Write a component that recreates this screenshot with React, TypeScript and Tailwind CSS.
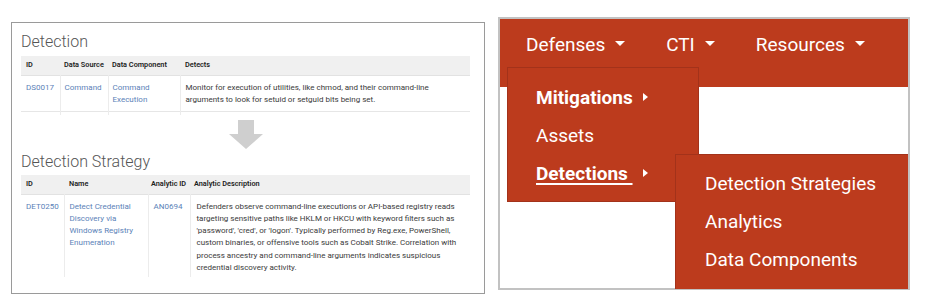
import React from "react";

const linkC = "text-[#5b82b8]";

function Caret() {
  return (
    <span className="inline-block ml-[10px] w-0 h-0 border-l-[5px] border-r-[5px] border-t-[5px] border-l-transparent border-r-transparent border-t-white align-middle relative top-[-2px]" />
  );
}

function RightCaret() {
  return (
    <span className="inline-block ml-[10px] w-0 h-0 border-t-[4px] border-b-[4px] border-l-[5px] border-t-transparent border-b-transparent border-l-white align-middle relative top-[-1px]" />
  );
}

export default function App() {
  return (
    <div
      className="w-[936px] h-[303px] bg-white flex items-start"
      style={{ fontFamily: "Roboto, 'Liberation Sans', sans-serif" }}
    >
      {/* Left panel */}
      <div className="ml-[11px] mt-[22px] w-[474px] h-[272px] border border-[#9a9a9a] pl-[9px] pr-[14px] pt-[8px] overflow-hidden">
        <div className="text-[16px] leading-[22px] font-light text-[#555]">Detection</div>
        <table className="mt-[3px] w-[449px] table-fixed border-collapse text-[8px] leading-[12px] text-[#3a3a3a]">
          <colgroup>
            <col className="w-[39px]" />
            <col className="w-[48px]" />
            <col className="w-[72px]" />
            <col className="w-[290px]" />
          </colgroup>
          <thead>
            <tr className="bg-[#f0f0f0] border-b border-[#e2e2e2] h-[19px] text-[7.3px] whitespace-nowrap text-[#222]">
              <th className="text-left font-semibold px-[5px]">ID</th>
              <th className="text-left font-semibold px-[4px]">Data Source</th>
              <th className="text-left font-semibold px-[4px]">Data Component</th>
              <th className="text-left font-semibold px-[5px]">Detects</th>
            </tr>
          </thead>
          <tbody>
            <tr className="border-b border-[#e6e6e6] align-top">
              <td className={`px-[5px] pt-[6px] pb-[5px] border-r border-[#ececec] ${linkC}`}>DS0017</td>
              <td className={`px-[4px] pt-[6px] pb-[5px] border-r border-[#ececec] ${linkC}`}>Command</td>
              <td className={`px-[4px] pt-[6px] pb-[5px] border-r border-[#ececec] ${linkC}`}>Command Execution</td>
              <td className="px-[5px] pt-[6px] pb-[5px]">
                Monitor for execution of utilities, like chmod, and their command-line arguments to look for setuid or setguid bits being set.
              </td>
            </tr>
            <tr className="h-[4px]">
              <td className="border-r border-[#ececec]" />
              <td className="border-r border-[#ececec]" />
              <td className="border-r border-[#ececec]" />
              <td />
            </tr>
          </tbody>
        </table>
        <div className="flex justify-center mt-[5px] h-[29px]">
          <svg width="34" height="29" viewBox="0 0 34 29">
            <path d="M9 0 H25 V14 H34 L17 29 L0 14 H9 Z" fill="#cfcfcf" />
          </svg>
        </div>
        <div className="mt-[2px] text-[16px] leading-[22px] font-light text-[#555]">Detection Strategy</div>
        <table className="mt-[2px] w-[449px] table-fixed border-collapse text-[8px] leading-[12.3px] text-[#3a3a3a]">
          <colgroup>
            <col className="w-[43px]" />
            <col className="w-[84px]" />
            <col className="w-[42px]" />
            <col className="w-[280px]" />
          </colgroup>
          <thead>
            <tr className="bg-[#f0f0f0] border-b border-[#e2e2e2] h-[19px] text-[7.3px] whitespace-nowrap text-[#222]">
              <th className="text-left font-semibold px-[5px]">ID</th>
              <th className="text-left font-semibold px-[5px]">Name</th>
              <th className="text-left font-semibold px-[3px]">Analytic ID</th>
              <th className="text-left font-semibold px-[4px]">Analytic Description</th>
            </tr>
          </thead>
          <tbody>
            <tr className="align-top">
              <td className={`px-[5px] pt-[6px] pb-[3px] border-r border-[#ececec] ${linkC}`}>DET0250</td>
              <td className={`px-[5px] pt-[6px] pb-[3px] border-r border-[#ececec] ${linkC}`}>
                Detect Credential Discovery via Windows Registry Enumeration
              </td>
              <td className={`px-[5px] pt-[6px] pb-[3px] border-r border-[#ececec] ${linkC}`}>AN0694</td>
              <td className="px-[6px] pt-[6px] pb-[3px]">
                Defenders observe command-line executions or API-based registry reads targeting sensitive paths like HKLM or HKCU with keyword filters such as 'password', 'cred', or 'logon'. Typically performed by Reg.exe, PowerShell, custom binaries, or offensive tools such as Cobalt Strike. Correlation with process ancestry and command-line arguments indicates suspicious credential discovery activity.
              </td>
            </tr>
          </tbody>
        </table>
      </div>

      {/* Right panel */}
      <div className="ml-[13px] mt-[17px] w-[412px] h-[273px] border-2 border-[#c2c2c2] bg-white relative">
        <div className="h-[68px] bg-[#bc3b1d] flex items-start pt-[16px] pl-[26px] text-white text-[19px] leading-[20px]">
          <span className="flex items-center">Defenses<Caret /></span>
          <span className="flex items-center ml-[41px]">CTI<Caret /></span>
          <span className="flex items-center ml-[41px]">Resources<Caret /></span>
        </div>

        {/* Dropdown 1 */}
        <div className="absolute left-[7px] top-[48px] w-[192px] h-[135px] bg-[#bc3b1d] border border-[#a3321a] pt-[11px] pb-[9px] pl-[28px] text-white text-[19px]">
          <div className="h-[38px] flex items-center font-bold">Mitigations<RightCaret /></div>
          <div className="h-[38px] flex items-center">Assets</div>
          <div className="h-[38px] flex items-center font-bold">
            <span className="underline underline-offset-[3px] decoration-[1.5px]">Detections&nbsp;</span>
            <RightCaret />
          </div>
        </div>

        {/* Submenu */}
        <div className="absolute left-[175px] top-[135px] w-[233px] h-[135px] bg-[#bc3b1d] border-t border-l border-[#a3321a] pt-[10px] pl-[29px] text-white text-[19px]">
          <div className="h-[38px] flex items-center">Detection Strategies</div>
          <div className="h-[38px] flex items-center">Analytics</div>
          <div className="h-[38px] flex items-center">Data Components</div>
        </div>
      </div>
    </div>
  );
}
